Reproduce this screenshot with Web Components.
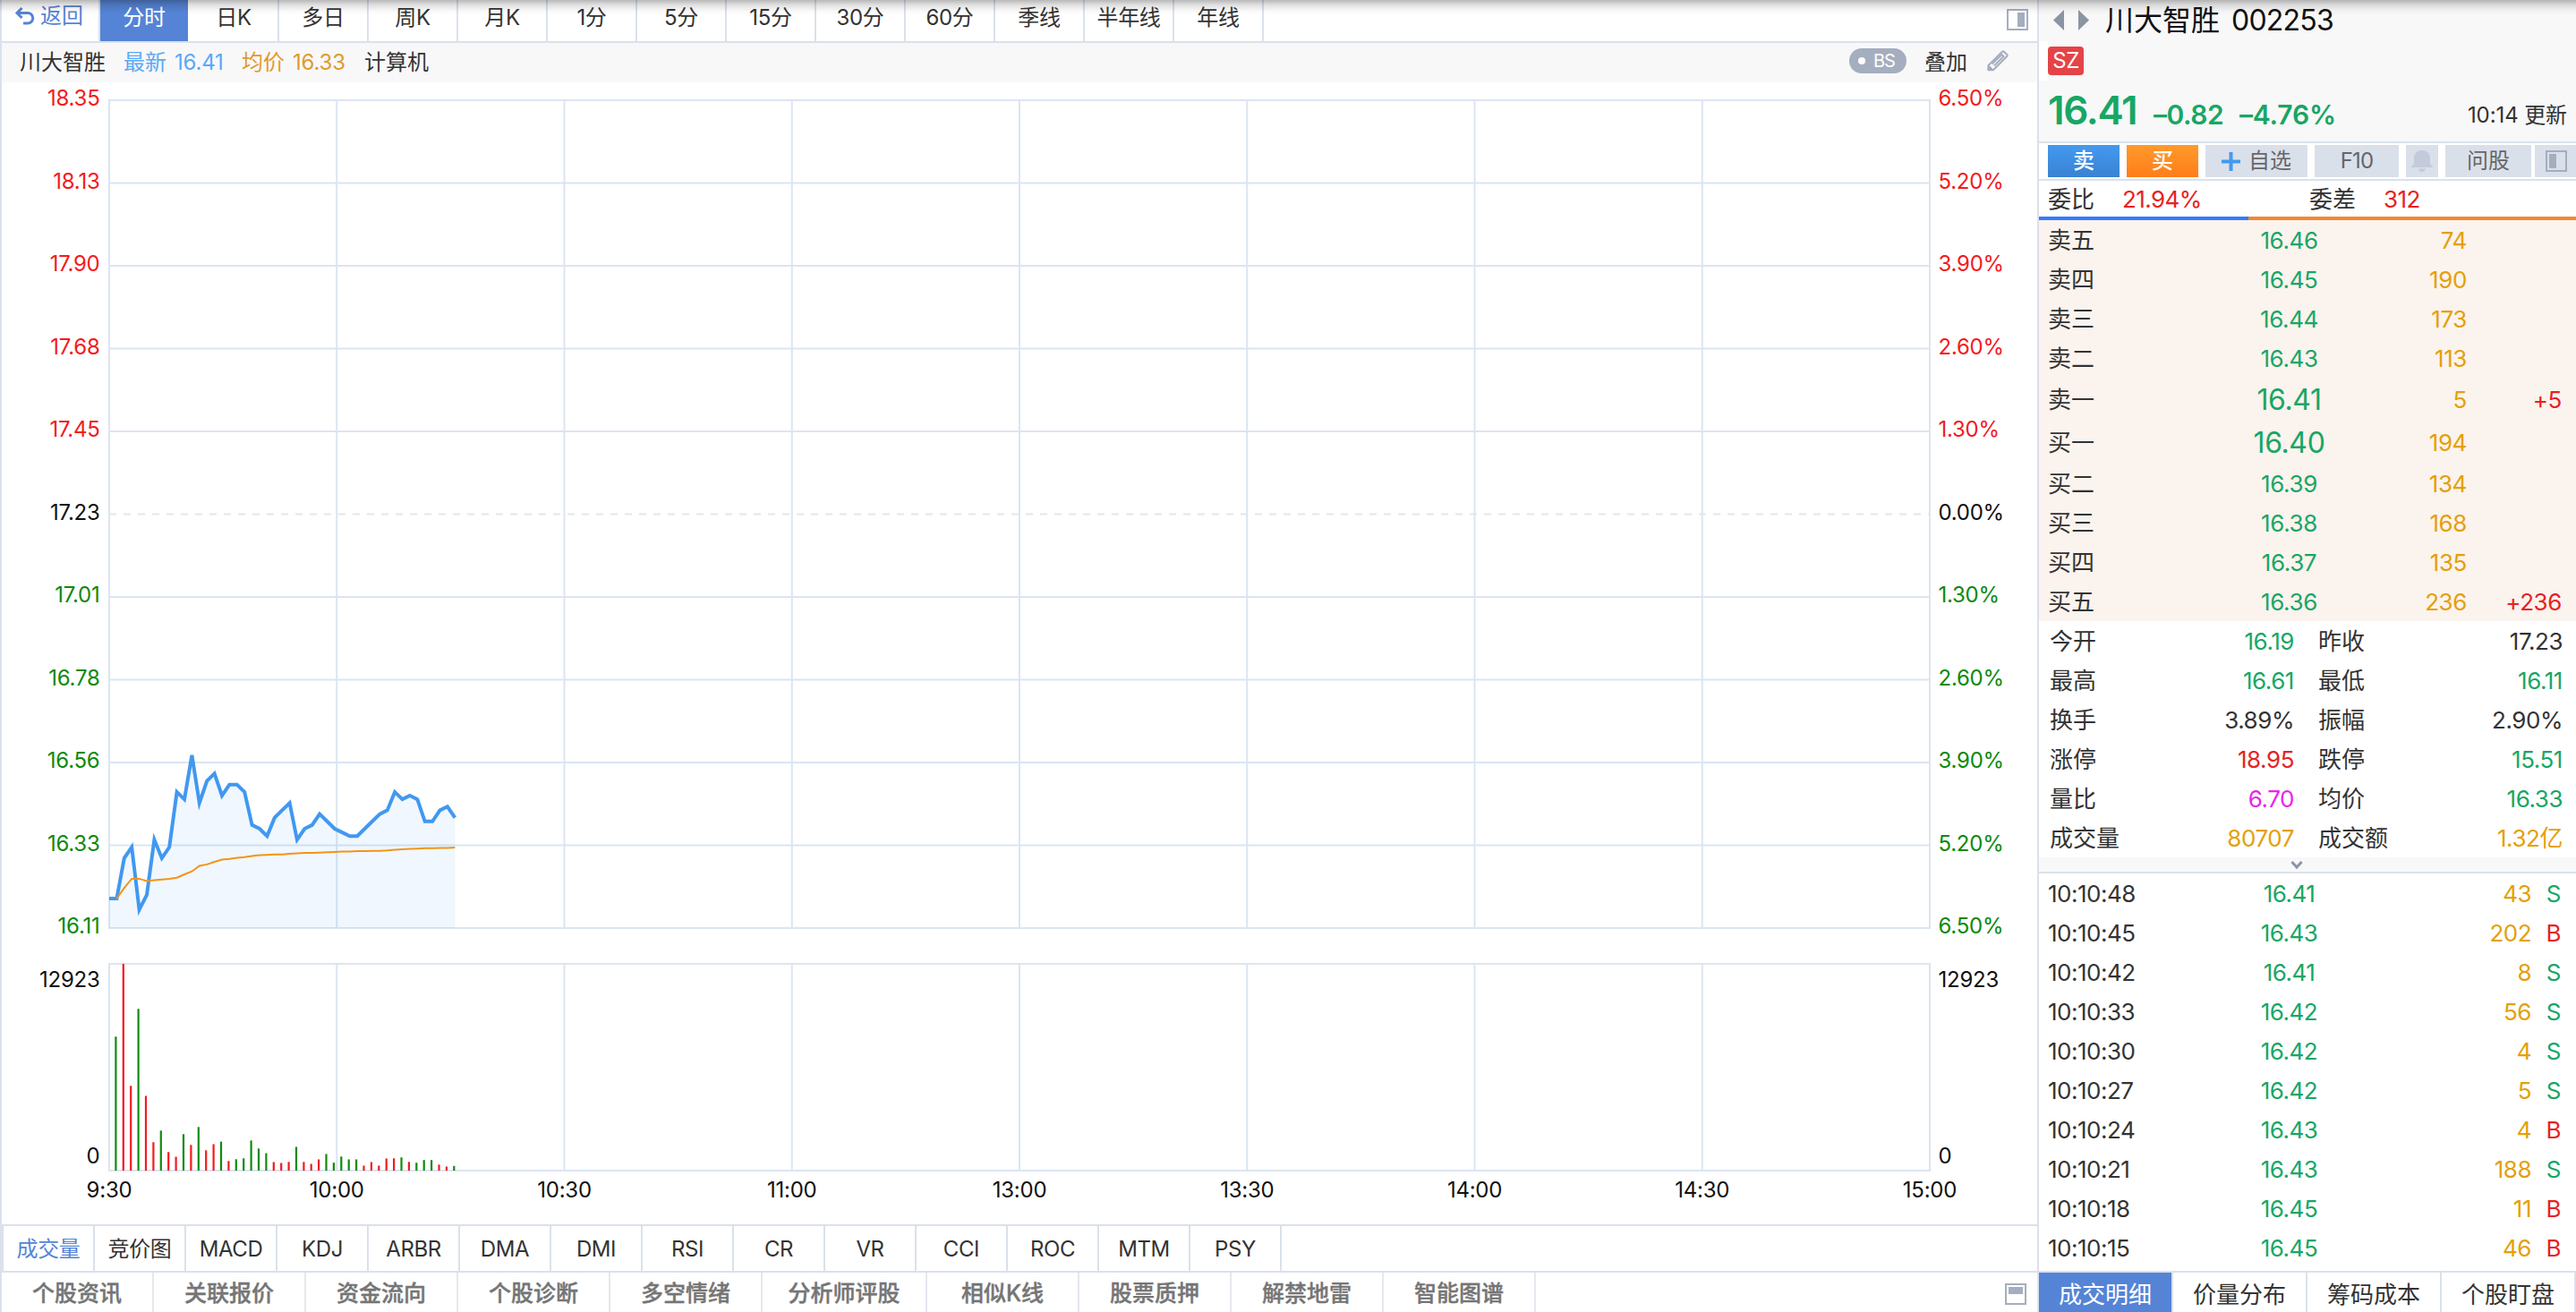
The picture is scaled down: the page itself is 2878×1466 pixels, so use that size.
<!DOCTYPE html>
<html lang="zh-CN">
<head>
<meta charset="UTF-8">
<title>川大智胜 002253</title>
<style>
  html, body { margin: 0; height: 100%; overflow: hidden; background: #fff; }
  body {
    font-family: Inter, 'Noto Sans CJK SC', sans-serif;
    font-size: 24px;
    color: #333;
    --line: #dae1ec;
    --blue: #5584d6;
    --red: #e62222;
    --green: #18a665;
    --gold: #e3a008;
  }
</style>
</head>
<body>
<stock-page></stock-page>

<script>
// 页面骨架
class StockPage extends HTMLElement {
    constructor() {
        super();
        this.attachShadow({ mode: 'open' });
    }

    connectedCallback() {
        this.shadowRoot.innerHTML = `
        <style>
          :host {
            display: flex;
            width: 2878px;
            height: 1466px;
            overflow: hidden;
            position: relative;
          }
          .left {
            box-sizing: border-box;
            width: 2278px;
            border-left: 2px solid var(--line);
            border-right: 2px solid var(--line);
            display: flex;
            flex-direction: column;
          }
          .right {
            width: 600px;
            display: flex;
            flex-direction: column;
          }
          .shadow {
            position: absolute;
            left: 0;
            top: 0;
            width: 100%;
            height: 16px;
            background: linear-gradient(rgba(0,0,0,.28), rgba(0,0,0,.12) 35%, rgba(0,0,0,.03) 75%, rgba(0,0,0,0));
          }
        </style>
        <div class="left">
          <period-tabs></period-tabs>
          <chart-legend></chart-legend>
          <minute-chart></minute-chart>
          <indicator-tabs></indicator-tabs>
          <info-tabs></info-tabs>
        </div>
        <div class="right">
          <quote-header></quote-header>
          <trade-buttons></trade-buttons>
          <order-book></order-book>
          <quote-stats></quote-stats>
          <deal-list></deal-list>
          <detail-tabs></detail-tabs>
        </div>
        <div class="shadow"></div>
      `;
    }
}

// 周期切换
class PeriodTabs extends HTMLElement {
    constructor() {
        super();
        this.attachShadow({ mode: 'open' });
        this.list = ['分时', '日K', '多日', '周K', '月K', '1分', '5分', '15分', '30分', '60分', '季线', '半年线', '年线'];
    }

    connectedCallback() {
        this.shadowRoot.innerHTML = `
        <style>
          :host {
            display: flex;
            height: 46px;
            border-bottom: 2px solid var(--line);
            line-height: 40px;
          }
          .back {
            width: 108px;
            border-right: 2px solid var(--line);
            color: var(--blue);
            display: flex;
            line-height: 36px;
          }
          .back svg { margin: 8px 5px 0 14px; }
          .tab {
            width: 98px;
            border-right: 2px solid var(--line);
            text-align: center;
            letter-spacing: -0.3px;
          }
          .tab.on { background: var(--blue); color: #fff; border-color: #fff; }
          .toggle { margin: 10px 10px 0 auto; }
        </style>
        <div class="back">
          <svg width="24" height="20" viewBox="0 0 24 20" fill="none" stroke="#5584d6" stroke-width="3">
            <path d="M3 6.5h12a5.7 5.7 0 0 1 0 11.5h-5"/><path d="M8.5 1 3 6.5 8.5 12"/>
          </svg>
          <span>返回</span>
        </div>
        ${this.list.map((t, i) => `<div class="tab ${i ? '' : 'on'}">${t}</div>`).join('')}
        <svg class="toggle" width="24" height="24"><rect x="1" y="1" width="22" height="22" fill="none" stroke="#a5aebe" stroke-width="2"/><rect x="12" y="4" width="8" height="16" fill="#a5aebe"/></svg>
      `;
    }
}

// 图例行
class ChartLegend extends HTMLElement {
    constructor() {
        super();
        this.attachShadow({ mode: 'open' });
    }

    connectedCallback() {
        this.shadowRoot.innerHTML = `
        <style>
          :host {
            display: flex;
            height: 44px;
            line-height: 43px;
            background: #f8f8f9;
            padding-left: 20px;
          }
          span { white-space: pre; }
          .name { width: 116px; }
          .new { width: 132px; color: #5ba8f5; }
          .avg { width: 137px; color: #e09a2b; }
          .num { letter-spacing: -0.2px; margin-left: 9px; }
          .bs {
            margin: 6px 20px 0 auto;
            width: 64px;
            height: 28px;
            border-radius: 14px;
            background: #a5aebe;
            color: #fff;
            font-size: 20px;
            line-height: 28px;
            letter-spacing: -1px;
            display: flex;
            align-items: center;
          }
          .bs i { width: 8px; height: 8px; border-radius: 50%; background: #fff; margin: 0 9px 0 10px; }
          .pen { margin: 8px 32px 0 22px; }
        </style>
        <span class="name">川大智胜</span>
        <span class="new">最新<span class="num">16.41</span></span>
        <span class="avg">均价<span class="num">16.33</span></span>
        <span>计算机</span>
        <div class="bs"><i></i>BS</div>
        <span>叠加</span>
        <svg class="pen" width="24" height="24" viewBox="0 0 24 24" fill="none" stroke="#a5aebe" stroke-width="2">
          <path d="M1.5 17 17 1.8q1-1 2 0l3.200 3.200q1 1 0 2L7 22.300H1.500z" stroke-linejoin="round"/>
          <path d="M8 17.500 18.500 7 16.500 5 5.500 15.500"/>
          <path d="M1.500 16.500 7.500 22.500H1z" fill="#a5aebe" stroke-width="1"/>
        </svg>
      `;
    }
}

// 分时图 + 成交量
class MinuteChart extends HTMLElement {
    constructor() {
        super();
        this.attachShadow({ mode: 'open' });
        // 每分钟价格，单位为高于 16.11 的分数
        this.price = [8, 8, 19, 22, 5, 9, 24, 19, 22, 37, 35, 47, 34, 40, 42, 36, 39, 39, 37, 28, 27, 25, 30, 32, 34, 24,
            27, 28, 31, 29, 27, 26, 25, 25, 27, 29, 31, 32, 37, 35, 36, 35, 29, 29, 32, 33, 30];
        this.avg = [8, 10.9, 13.4, 13.4, 12.8, 13, 13.2, 13.4, 13.7, 14.6, 15.4, 16.9, 17.3, 18, 18.6, 18.8, 19.1, 19.3, 19.6,
            19.8, 19.9, 20, 20, 20.2, 20.3, 20.4, 20.4, 20.5, 20.6, 20.7, 20.8, 20.8, 20.9, 20.9, 21, 21, 21.1, 21.3, 21.4,
            21.5, 21.6, 21.7, 21.7, 21.8, 21.8, 21.9];
        // 成交量柱高，负数为绿柱
        this.vol = [-149.7, 231, 94.7, -180.7, 83.5, 31.7, -44.7, 20.7, 15.5, -40.7, 28.7, -48.7, 22.7, 29.5, -32.3, 10.7,
            -12.7, -13.7, -33.7, -24.7, -19.5, 9.5, 8.5, 9.7, -26.5, 9.7, 7.5, 12.5, -18.5, -8.8, -15.7, -12.5, -12.5, 5.5,
            9.5, 5.5, 13.5, 13.7, -14.7, 9.7, -8.8, -11.8, -11.8, 6.7, 4.5, -5.2];
        this.left = ['18.35', '18.13', '17.90', '17.68', '17.45', '17.23', '17.01', '16.78', '16.56', '16.33', '16.11'];
        this.right = ['6.50%', '5.20%', '3.90%', '2.60%', '1.30%', '0.00%', '1.30%', '2.60%', '3.90%', '5.20%', '6.50%'];
        this.times = ['9:30', '10:00', '10:30', '11:00', '13:00', '13:30', '14:00', '14:30', '15:00'];
    }

    connectedCallback() {
        // viewBox 左上角为 (2, 92)
        const x0 = 122, x1 = 2156, y0 = 112, y1 = 1037, v0 = 1077, v1 = 1308;
        const stepX = (x1 - x0) / 8, stepY = (y1 - y0) / 10, minute = 8.398;
        const toY = v => y1 - v * 4.111;

        let grid = '';
        for (let i = 0; i <= 8; i++) {
            const x = x0 + i * stepX;
            grid += `<path d="M${x} ${y0 - 1}V${y1 + 1}M${x} ${v0 - 1}V${v1 + 1}"/>`;
        }
        for (let i = 0; i <= 10; i++) {
            const y = y0 + i * stepY;
            grid += i === 5
                ? `<path d="M${x0} ${y}H${x1}" stroke="#e3e5e8" stroke-dasharray="8 8"/>`
                : `<path d="M${x0} ${y}H${x1}"/>`;
        }
        grid += `<path d="M${x0} ${v0}H${x1}M${x0} ${v1}H${x1}"/>`;

        const line = this.price.map((v, i) => `${(x0 + i * minute).toFixed(1)},${toY(v).toFixed(1)}`).join(' ');
        const avg = this.avg.map((v, i) => `${(x0 + (i + 1) * minute).toFixed(1)},${toY(v).toFixed(1)}`).join(' ');
        const end = x0 + (this.price.length - 1) * minute;
        const bars = this.vol.map((v, i) => {
            const h = Math.abs(v);
            return `<rect x="${(128.3 + i * minute).toFixed(1)}" y="${v1 - h}" width="2.2" height="${h}" fill="${v < 0 ? '#0f8b0f' : '#f5191d'}"/>`;
        }).join('');
        const color = i => i < 5 ? '#f5191d' : i > 5 ? '#0b8a0b' : '#111';

        this.shadowRoot.innerHTML = `
        <style>
          :host { display: block; height: 1276px; }
          svg { display: block; }
          text { font-size: 24px; letter-spacing: -0.25px; }
        </style>
        <svg width="2274" height="1276" viewBox="2 92 2274 1276">
          <g stroke="#dbe5f2" stroke-width="2">${grid}</g>
          <polygon points="${x0},${y1} ${line} ${end},${y1}" fill="rgba(66,152,240,.08)"/>
          <polyline points="${line}" fill="none" stroke="#4198f0" stroke-width="4" stroke-miterlimit="5"/>
          <polyline points="${avg}" fill="none" stroke="#f39416" stroke-width="2"/>
          ${bars}
          ${this.left.map((t, i) => `<text x="111.500" y="${y0 + i * stepY + 6}" text-anchor="end" fill="${color(i)}">${t}</text>`).join('')}
          ${this.right.map((t, i) => `<text x="2165.500" y="${y0 + i * stepY + 6}" fill="${color(i)}">${t}</text>`).join('')}
          <g fill="#111">
            <text x="111.500" y="1103" text-anchor="end">12923</text>
            <text x="111.500" y="1300" text-anchor="end">0</text>
            <text x="2165.500" y="1103">12923</text>
            <text x="2165.500" y="1300">0</text>
            ${this.times.map((t, i) => `<text x="${x0 + i * stepX}" y="1338" text-anchor="middle">${t}</text>`).join('')}
          </g>
        </svg>
      `;
    }
}

// 指标切换
class IndicatorTabs extends HTMLElement {
    constructor() {
        super();
        this.attachShadow({ mode: 'open' });
        this.list = ['成交量', '竞价图', 'MACD', 'KDJ', 'ARBR', 'DMA', 'DMI', 'RSI', 'CR', 'VR', 'CCI', 'ROC', 'MTM', 'PSY'];
    }

    connectedCallback() {
        this.shadowRoot.innerHTML = `
        <style>
          :host {
            display: flex;
            height: 50px;
            line-height: 51px;
            border-top: 2px solid var(--line);
            border-bottom: 2px solid var(--line);
            border-left: 2px solid var(--line);
          }
          span {
            width: 100px;
            border-right: 2px solid var(--line);
            text-align: center;
            letter-spacing: -0.4px;
          }
          span:first-of-type { color: var(--blue); }
        </style>
        ${this.list.map(t => `<span>${t}</span>`).join('')}
      `;
    }
}

// 底部资讯栏
class InfoTabs extends HTMLElement {
    constructor() {
        super();
        this.attachShadow({ mode: 'open' });
        this.list = ['个股资讯', '关联报价', '资金流向', '个股诊断', '多空情绪', '分析师评股', '相似K线', '股票质押', '解禁地雷', '智能图谱'];
    }

    connectedCallback() {
        this.shadowRoot.innerHTML = `
        <style>
          :host { display: flex; height: 44px; line-height: 47px; color: #757575; font-weight: 500; font-size: 25px; }
          span {
            width: 168px;
            border-right: 2px solid #e4e8ee;
            text-align: center;
            -webkit-text-stroke: 0.4px #757575;
          }
          span.wide { width: 182px; }
          svg { margin: 12px 12px 0 auto; }
        </style>
        ${this.list.map(t => `<span class="${t === '分析师评股' ? 'wide' : ''}">${t}</span>`).join('')}
        <svg width="24" height="24"><rect x="1" y="1" width="22" height="22" fill="none" stroke="#a5aebe" stroke-width="2"/><rect x="4" y="4" width="16" height="8" fill="#a5aebe"/></svg>
      `;
    }
}

// 股票名称与最新价
class QuoteHeader extends HTMLElement {
    constructor() {
        super();
        this.attachShadow({ mode: 'open' });
    }

    connectedCallback() {
        this.shadowRoot.innerHTML = `
        <style>
          :host {
            display: flex;
            flex-direction: column;
            height: 158px;
            background: #f8f8f8;
            border-bottom: 2px solid var(--line);
          }
          .title {
            display: flex;
            height: 46px;
            line-height: 45px;
            font-size: 32px;
            color: #111;
          }
          .title svg { margin: 11px 18px 0 16px; }
          .title b { font-weight: 400; margin-left: 13px; letter-spacing: -0.8px; }
          .market { display: flex; height: 44px; }
          .market::before { content: ""; width: 10px; background: #fff; }
          .market span {
            margin-top: 6px;
            width: 40px;
            height: 32px;
            line-height: 32px;
            border-radius: 4px;
            background: #e44447;
            color: #fff;
            text-align: center;
            letter-spacing: -0.5px;
          }
          .price {
            display: flex;
            align-items: baseline;
            padding: 0 10px 0 10px;
            color: var(--green);
            font-weight: 600;
            font-size: 30px;
            line-height: 66px;
            height: 68px;
          }
          .price .last { font-size: 44px; width: 118px; letter-spacing: -1.3px; }
          .price .diff { width: 96px; letter-spacing: -0.5px; }
          .price .rate { letter-spacing: -0.2px; }
          .price .time {
            margin-left: auto;
            padding-bottom: 2px;
            color: #333;
            font-weight: 400;
            font-size: 24px;
            letter-spacing: -0.1px;
            transform: translateY(-2px);
          }
        </style>
        <div class="title">
          <svg width="40" height="24" fill="#8b94a3"><path d="M12 0v23L0 11.500z"/><path d="M28 0v23l12-11.500z"/></svg>
          川大智胜<b>002253</b>
        </div>
        <div class="market"><span>SZ</span></div>
        <div class="price">
          <span class="last">16.41</span>
          <span class="diff">–0.82</span>
          <span class="rate">–4.76%</span>
          <span class="time">10:14 更新</span>
        </div>
      `;
    }
}

// 买卖按钮行
class TradeButtons extends HTMLElement {
    constructor() {
        super();
        this.attachShadow({ mode: 'open' });
    }

    connectedCallback() {
        this.shadowRoot.innerHTML = `
        <style>
          :host {
            display: flex;
            gap: 8px;
            height: 36px;
            padding: 2px 0 2px 10px;
            border-bottom: 2px solid var(--line);
            line-height: 34px;
          }
          div {
            background: #dae0ea;
            color: #666;
            display: flex;
            align-items: center;
            justify-content: center;
          }
          .sell, .buy { width: 80px; color: #fff; font-weight: 500; }
          .sell { background: linear-gradient(#4399f0, #3a82d2); }
          .buy { background: linear-gradient(#ff9a2b, #ff7d1a); }
          .add { width: 114px; gap: 9px; }
          .f10 { width: 94px; letter-spacing: -0.8px; }
          .bell { width: 36px; }
          .ask { width: 96px; }
          .panel { width: 46px; margin-left: -4px; padding-left: 2px; box-sizing: border-box; }
        </style>
        <div class="sell">卖</div>
        <div class="buy">买</div>
        <div class="add">
          <svg width="21" height="21" fill="#4299f0"><path d="M8.500 0h4v8.500h8.500v4h-8.500V21h-4v-8.500H0v-4h8.500z"/></svg>自选
        </div>
        <div class="f10">F10</div>
        <div class="bell">
          <svg width="24" height="24" fill="#c3cad9"><path d="M12 0c6 0 9 4 9 9v6l3 3v1H0v-1l3-3V9c0-5 3-9 9-9zM8 20.500h8q-1 3.500-4 3.500t-4-3.500z"/></svg>
        </div>
        <div class="ask">问股</div>
        <div class="panel">
          <svg width="24" height="24"><rect x="1" y="1" width="22" height="22" fill="none" stroke="#a5aebe" stroke-width="2"/><rect x="4" y="4" width="8" height="16" fill="#a5aebe"/></svg>
        </div>
      `;
    }
}

// 五档盘口
class OrderBook extends HTMLElement {
    constructor() {
        super();
        this.attachShadow({ mode: 'open' });
        this.rows = [
            ['卖五', '16.46', '74', ''],
            ['卖四', '16.45', '190', ''],
            ['卖三', '16.44', '173', ''],
            ['卖二', '16.43', '113', ''],
            ['卖一', '16.41', '5', '+5'],
            ['买一', '16.40', '194', ''],
            ['买二', '16.39', '134', ''],
            ['买三', '16.38', '168', ''],
            ['买四', '16.37', '135', ''],
            ['买五', '16.36', '236', '+236'],
        ];
    }

    connectedCallback() {
        this.shadowRoot.innerHTML = `
        <style>
          :host { display: block; font-size: 26px; letter-spacing: -0.4px; }
          .label { letter-spacing: 0; }
          .ratio { display: flex; height: 40px; line-height: 42px; padding-left: 10px; }
          .ratio span { width: 83px; }
          .ratio .red { color: var(--red); width: 209px; letter-spacing: -0.6px; }
          .bar { display: flex; height: 4px; background: #f28732; }
          .bar::before { content: ""; width: 234px; background: #3379ff; }
          .book { background: #fbf3ee; }
          .row {
            display: grid;
            grid-template-columns: 219px 101px 148px 106px;
            padding-left: 10px;
            height: 44px;
            line-height: 46px;
          }
          .row.first { height: 48px; line-height: 50px; }
          .row.first .p { font-size: 32px; }
          .p { color: var(--green); text-align: center; }
          .q { color: var(--gold); text-align: right; }
          .d { color: var(--red); text-align: right; }
        </style>
        <div class="ratio">
          <span class="label">委比</span><span class="red">21.94%</span>
          <span class="label">委差</span><span class="red">312</span>
        </div>
        <div class="bar"></div>
        <div class="book">
          ${this.rows.map((r, i) => `
            <div class="row ${i === 4 || i === 5 ? 'first' : ''}">
              <span class="label">${r[0]}</span><span class="p">${r[1]}</span><span class="q">${r[2]}</span><span class="d">${r[3]}</span>
            </div>`).join('')}
        </div>
      `;
    }
}

// 行情统计
class QuoteStats extends HTMLElement {
    constructor() {
        super();
        this.attachShadow({ mode: 'open' });
        this.rows = [
            ['今开', '16.19', 'green', '昨收', '17.23', ''],
            ['最高', '16.61', 'green', '最低', '16.11', 'green'],
            ['换手', '3.89%', '', '振幅', '2.90%', ''],
            ['涨停', '18.95', 'red', '跌停', '15.51', 'green'],
            ['量比', '6.70', 'pink', '均价', '16.33', 'green'],
            ['成交量', '80707', 'gold', '成交额', '1.32亿', 'gold'],
        ];
    }

    connectedCallback() {
        this.shadowRoot.innerHTML = `
        <style>
          :host { display: block; font-size: 26px; border-bottom: 2px solid var(--line); }
          .row {
            display: grid;
            grid-template-columns: 120px 153px 27px 120px 153px;
            padding-left: 12px;
            height: 44px;
            line-height: 46px;
          }
          .v { text-align: right; letter-spacing: -0.45px; }
          .v2 { grid-column: 5; }
          .l2 { grid-column: 4; }
          .green { color: var(--green); }
          .red { color: var(--red); }
          .gold { color: var(--gold); }
          .pink { color: #ea25ea; }
          .fold { height: 16px; background: #f8f8f9; display: flex; }
          .fold svg { margin: 3px 0 0 280px; }
        </style>
        ${this.rows.map(r => `
          <div class="row">
            <span>${r[0]}</span><span class="v ${r[2]}">${r[1]}</span>
            <span class="l2">${r[3]}</span><span class="v v2 ${r[5]}">${r[4]}</span>
          </div>`).join('')}
        <div class="fold">
          <svg width="16" height="11" fill="none" stroke="#8b94a3" stroke-width="3"><path d="M2.500 2 8 8l5.500-6"/></svg>
        </div>
      `;
    }
}

// 逐笔成交
class DealList extends HTMLElement {
    constructor() {
        super();
        this.attachShadow({ mode: 'open' });
        this.rows = [
            ['10:10:48', '16.41', '43', 'S'],
            ['10:10:45', '16.43', '202', 'B'],
            ['10:10:42', '16.41', '8', 'S'],
            ['10:10:33', '16.42', '56', 'S'],
            ['10:10:30', '16.42', '4', 'S'],
            ['10:10:27', '16.42', '5', 'S'],
            ['10:10:24', '16.43', '4', 'B'],
            ['10:10:21', '16.43', '188', 'S'],
            ['10:10:18', '16.45', '11', 'B'],
            ['10:10:15', '16.45', '46', 'B'],
        ];
    }

    connectedCallback() {
        this.shadowRoot.innerHTML = `
        <style>
          :host { display: block; height: 444px; font-size: 26px; letter-spacing: -0.5px; }
          .row {
            display: grid;
            grid-template-columns: 200px 139px 201px 33px;
            padding-left: 10px;
            height: 44px;
            line-height: 46px;
          }
          .p { color: var(--green); text-align: center; }
          .q { color: var(--gold); text-align: right; }
          .f { text-align: right; }
          .S { color: var(--green); }
          .B { color: var(--red); }
        </style>
        ${this.rows.map(r => `
          <div class="row">
            <span>${r[0]}</span><span class="p">${r[1]}</span><span class="q">${r[2]}</span><span class="f ${r[3]}">${r[3]}</span>
          </div>`).join('')}
      `;
    }
}

// 右下角切换
class DetailTabs extends HTMLElement {
    constructor() {
        super();
        this.attachShadow({ mode: 'open' });
        this.list = ['成交明细', '价量分布', '筹码成本', '个股盯盘'];
    }

    connectedCallback() {
        this.shadowRoot.innerHTML = `
        <style>
          :host { display: flex; height: 44px; line-height: 49px; font-size: 26px; border-top: 2px solid var(--line); }
          span {
            width: 148px;
            border-right: 2px solid var(--line);
            text-align: center;
          }
          span:first-of-type { background: var(--blue); color: #fff; }
        </style>
        ${this.list.map(t => `<span>${t}</span>`).join('')}
      `;
    }
}

customElements.define('period-tabs', PeriodTabs);
customElements.define('chart-legend', ChartLegend);
customElements.define('minute-chart', MinuteChart);
customElements.define('indicator-tabs', IndicatorTabs);
customElements.define('info-tabs', InfoTabs);
customElements.define('quote-header', QuoteHeader);
customElements.define('trade-buttons', TradeButtons);
customElements.define('order-book', OrderBook);
customElements.define('quote-stats', QuoteStats);
customElements.define('deal-list', DealList);
customElements.define('detail-tabs', DetailTabs);
customElements.define('stock-page', StockPage);
</script>
</body>
</html>
